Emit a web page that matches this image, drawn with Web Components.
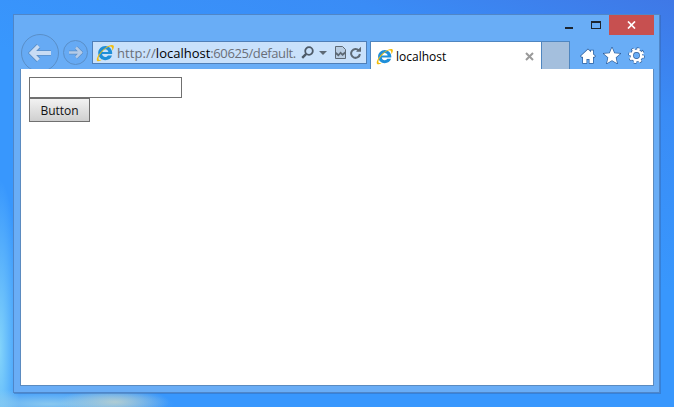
<!DOCTYPE html>
<html>
<head>
<meta charset="utf-8">
<title>localhost</title>
<style>
  html, body { margin: 0; height: 100%; overflow: hidden; }
  body { font-family: "Open Sans", "Liberation Sans", sans-serif; }
</style>
</head>
<body>
<ie-desktop>
  <ie-window>
    <ie-caption slot="caption"></ie-caption>
    <ie-nav-button slot="toolbar" kind="back"></ie-nav-button>
    <ie-nav-button slot="toolbar" kind="forward"></ie-nav-button>
    <ie-address slot="toolbar"></ie-address>
    <ie-tab slot="toolbar">localhost</ie-tab>
    <ie-tools slot="toolbar"></ie-tools>
    <ie-page>
      <input-box></input-box>
      <page-button>Button</page-button>
    </ie-page>
  </ie-window>
</ie-desktop>

<script>
// the blue e with its yellow ring, used by the address bar and the tab
const IE_LOGO = (size) => `
  <svg width="${size}" height="${size}" viewBox="0 0 18 18" style="display:block;flex:none">
    <path fill-rule="evenodd" d="M9.300 2c-3.900 0-7.100 3.200-7.100 7.100s3.200 7.100 7.100 7.100c3.200 0 5.800-1.900 6.700-4.700h-4c-.5.900-1.500 1.500-2.700 1.500-1.700 0-3-1.200-3.200-2.900h10c.1-.3.100-.6.100-1 0-3.900-3-7.100-6.900-7.100zM6.200 8c.3-1.500 1.500-2.700 3.100-2.700S12.100 6.500 12.400 8z" fill="#1f8fd8"/>
    <path d="M1.200 17C-.3 15.400 2.300 9.800 7.400 5.400 12 1.500 16.200.1 17.500 1.500c.8 1 .2 3-1.200 5.200.1-1.700-.1-3.100-.8-3.800-1.200-1.200-4.600.4-7.900 3.400C3.800 9.900 1.800 13.900 2.700 15.400c.5.700 1.800.8 3.400.2-1.900 1.400-3.900 2.200-4.900 1.400z" fill="#f2bd0c"/>
  </svg>`;

class IeDesktop extends HTMLElement {
  constructor() {
    super();
    this.attachShadow({ mode: 'open' });
    this.shadowRoot.innerHTML = `
      <style>
        :host {
          display: block;
          box-sizing: border-box;
          width: 674px;
          height: 407px;
          padding: 14px 13px;
          background:
            radial-gradient(ellipse 55px 14px at 115px 402px, rgba(190,210,205,.85), rgba(190,210,205,0) 100%),
            radial-gradient(ellipse 125px 15px at 50px 404px, rgba(145,205,238,.9), rgba(145,205,238,0) 100%),
            radial-gradient(ellipse 20px 170px at 0 350px, rgba(135,215,250,.95), rgba(135,215,250,0) 100%),
            linear-gradient(200deg, #3f78e6 0, #3a8cf6 18%, #3897fd 45%, #3897fd 100%);
        }
      </style>
      <slot></slot>`;
  }
}

class IeWindow extends HTMLElement {
  constructor() {
    super();
    this.attachShadow({ mode: 'open' });
    this.shadowRoot.innerHTML = `
      <style>
        :host {
          display: flex;
          flex-direction: column;
          box-sizing: border-box;
          width: 647px;
          height: 379px;
          padding: 0 5px 6px 6px;
          background: #69adf6;
          border: 1px solid #4f86c8;
          box-shadow: 1px 1px 0 rgba(50,90,150,.35);
        }
        .caption { height: 26px; display: flex; justify-content: flex-end; flex: none; }
        .toolbar { height: 28px; display: flex; align-items: flex-start; flex: none; }
        .page { flex: 1; display: flex; min-height: 0; position: relative; }
      </style>
      <div class="caption"><slot name="caption"></slot></div>
      <div class="toolbar"><slot name="toolbar"></slot></div>
      <div class="page"><slot></slot></div>`;
  }
}

class IeCaption extends HTMLElement {
  constructor() {
    super();
    this.attachShadow({ mode: 'open' });
    this.shadowRoot.innerHTML = `
      <style>
        :host { display: flex; align-items: flex-start; }
        .min { width: 8px; height: 2px; background: #1c2530; margin: 12px 18px 0 0; }
        .max { box-sizing: border-box; width: 10px; height: 8px; border: 1px solid #1c2530; border-top-width: 2px; margin: 6px 8px 0 0; }
        .close { width: 45px; height: 20px; background: #c75050; display: flex; align-items: center; justify-content: center; }
      </style>
      <div class="min"></div>
      <div class="max"></div>
      <div class="close">
        <svg width="9" height="8" viewBox="0 0 9 8"><path d="M1 .5l7 7M8 .5l-7 7" stroke="#fff" stroke-width="1.700" fill="none"/></svg>
      </div>`;
  }
}

class IeNavButton extends HTMLElement {
  constructor() {
    super();
    this.attachShadow({ mode: 'open' });
    const back = this.getAttribute('kind') === 'back';
    const arrow = back
      ? `<svg width="24" height="18" viewBox="0 0 24 18"><path d="M3 9h20M10.500 2L3.500 9l7 7" fill="none" stroke="#5b8ec6" stroke-width="5.400"/><path d="M3 9h20M10.500 2L3.500 9l7 7" fill="none" stroke="#c8dcf4" stroke-width="3.800"/></svg>`
      : `<svg width="15" height="13" viewBox="0 0 15 13"><path d="M14 6.500H1M8 1.500l5 5-5 5" fill="none" stroke="#5b8ec6" stroke-width="3.800"/><path d="M14 6.500H1M8 1.500l5 5-5 5" fill="none" stroke="#b4cbe8" stroke-width="2.500"/></svg>`;
    this.shadowRoot.innerHTML = `
      <style>
        :host {
          display: flex;
          align-items: center;
          justify-content: center;
          box-sizing: border-box;
          flex: none;
          border-radius: 50%;
          border: 1px solid #5a8fc8;
          background: #66aaf4;
          width: ${back ? 38 : 25}px;
          height: ${back ? 38 : 25}px;
          margin: ${back ? '-7px 4px 0 1px' : '-1px 4px 0 0'};
        }
      </style>
      ${arrow}`;
  }
}

class IeAddress extends HTMLElement {
  constructor() {
    super();
    this.attachShadow({ mode: 'open' });
    this.shadowRoot.innerHTML = `
      <style>
        :host {
          display: flex;
          align-items: center;
          box-sizing: border-box;
          flex: none;
          width: 275px;
          height: 23px;
          margin-right: 3px;
          padding: 0 3px;
          background: #c9e1fb;
          border: 1px solid #4f7fb8;
          font-size: 13px;
          color: #6a6f78;
          white-space: nowrap;
        }
        .url { margin-left: 3px; width: 184px; overflow: hidden; letter-spacing: .1px; }
        b { font-weight: 400; color: #000; letter-spacing: 0; }
        .tail { letter-spacing: -.4px; }
        svg { flex: none; display: block; }
      </style>
      ${IE_LOGO(18)}
      <span class="url">http://<b>localhost</b><span class="tail">:60625/default.</span></span>
      <svg width="13" height="13" viewBox="0 0 13 13"><circle cx="8" cy="5" r="3.800" fill="none" stroke="#4d5a68" stroke-width="1.800"/><path d="M5.200 7.800L1.200 11.800" stroke="#4d5a68" stroke-width="2.400"/></svg>
      <svg style="margin-left:5px" width="8" height="4" viewBox="0 0 8 4"><path d="M0 0h8L4 4z" fill="#5d6975"/></svg>
      <svg style="margin-left:8px" width="11" height="13" viewBox="0 0 11 13"><path d="M.5.500h7l3 3v9H.5z" fill="#b9cde2" stroke="#5d6975"/><path d="M1 6l2.500 2 2-2.500 2 2L10 5.500v2.500l-2.500 2-2-2-2 2.500L1 8.500z" fill="#5d6975"/></svg>
      <svg style="margin-left:4px" width="11" height="13" viewBox="0 0 11 13"><path d="M8.800 4.500A4.400 4.400 0 1 0 9.900 8" fill="none" stroke="#5d6975" stroke-width="2"/><path d="M6 5.800h5V.8z" fill="#5d6975"/></svg>`;
  }
}

class IeTab extends HTMLElement {
  constructor() {
    super();
    this.attachShadow({ mode: 'open' });
    this.shadowRoot.innerHTML = `
      <style>
        :host { display: flex; flex: none; height: 28px; }
        .tab {
          display: flex;
          align-items: center;
          box-sizing: border-box;
          width: 172px;
          height: 29px;
          padding: 0 7px 0 5px;
          background: #fff;
          border: 1px solid #4f86c0;
          border-bottom: 0;
          font-size: 12px;
          color: #000;
          position: relative;
          z-index: 1;
        }
        .label { flex: 1; margin-left: 3px; }
        .blank {
          box-sizing: border-box;
          width: 29px;
          height: 28px;
          margin-left: -1px;
          background: #a4bfdd;
          border: 1px solid #4f86c0;
          border-bottom: 0;
        }
      </style>
      <div class="tab">
        ${IE_LOGO(17)}
        <span class="label"><slot></slot></span>
        <svg width="9" height="9" viewBox="0 0 9 9"><path d="M1 1l7 7M8 1l-7 7" stroke="#9a9a9a" stroke-width="2" fill="none"/></svg>
      </div>
      <div class="blank"></div>`;
  }
}

class IeTools extends HTMLElement {
  constructor() {
    super();
    this.attachShadow({ mode: 'open' });
    const stroke = 'stroke="#2f5f9c" stroke-width="1.400" paint-order="stroke"';
    this.shadowRoot.innerHTML = `
      <style>
        :host { display: flex; align-items: center; flex: none; height: 23px; margin: 3px 0 0 10px; gap: 7px; }
        svg { display: block; flex: none; }
      </style>
      <svg width="16" height="16" viewBox="0 0 16 16"><path d="M8 1.500L11 4.300V2.500h2v3.700l2 1.900-1.100 1.200-.9-.8V15H9.500v-4h-3v4H3V8.500l-.9.800L1 8.100z" fill="#fff" ${stroke}/></svg>
      <svg width="18" height="17" viewBox="0 0 18 17"><path d="M9 .8l2.300 5.400 5.800.5-4.400 3.800 1.300 5.700L9 13.200l-5 3 1.300-5.700L.9 6.700l5.800-.5z" fill="#fff" ${stroke}/></svg>
      <svg width="17" height="17" viewBox="0 0 17 17" fill="none">
        <circle cx="8.500" cy="8.500" r="4.700" stroke="#2f5f9c" stroke-width="4"/>
        <circle cx="8.500" cy="8.500" r="6.600" stroke="#2f5f9c" stroke-width="3.400" stroke-dasharray="2.590 2.590"/>
        <circle cx="8.500" cy="8.500" r="4.700" stroke="#fff" stroke-width="2.600"/>
        <circle cx="8.500" cy="8.500" r="6.400" stroke="#fff" stroke-width="2.400" stroke-dasharray="2.510 2.510"/>
      </svg>`;
  }
}

class IePage extends HTMLElement {
  constructor() {
    super();
    this.attachShadow({ mode: 'open' });
    this.shadowRoot.innerHTML = `
      <style>
        :host {
          display: flex;
          flex-direction: column;
          align-items: flex-start;
          flex: 1;
          box-sizing: border-box;
          padding: 8px;
          background: #fff;
          border: 1px solid #5b8bc0;
          border-width: 0 1px 1px 1px;
          position: relative;
          z-index: 2;
        }
      </style>
      <slot></slot>`;
  }
}

class InputBox extends HTMLElement {
  constructor() {
    super();
    this.attachShadow({ mode: 'open' });
    this.shadowRoot.innerHTML = `
      <style>
        :host { display: block; box-sizing: border-box; width: 153px; height: 21px; background: #fff; border: 1px solid #707070; }
      </style>`;
  }
}

class PageButton extends HTMLElement {
  constructor() {
    super();
    this.attachShadow({ mode: 'open' });
    this.shadowRoot.innerHTML = `
      <style>
        :host {
          display: flex;
          align-items: center;
          justify-content: center;
          box-sizing: border-box;
          width: 61px;
          height: 24px;
          background: linear-gradient(#f2f2f2, #cfcfcf);
          border: 1px solid #707070;
          font-size: 12px;
          color: #111;
        }
      </style>
      <slot></slot>`;
  }
}

customElements.define('ie-desktop', IeDesktop);
customElements.define('ie-window', IeWindow);
customElements.define('ie-caption', IeCaption);
customElements.define('ie-nav-button', IeNavButton);
customElements.define('ie-address', IeAddress);
customElements.define('ie-tab', IeTab);
customElements.define('ie-tools', IeTools);
customElements.define('ie-page', IePage);
customElements.define('input-box', InputBox);
customElements.define('page-button', PageButton);
</script>
</body>
</html>
